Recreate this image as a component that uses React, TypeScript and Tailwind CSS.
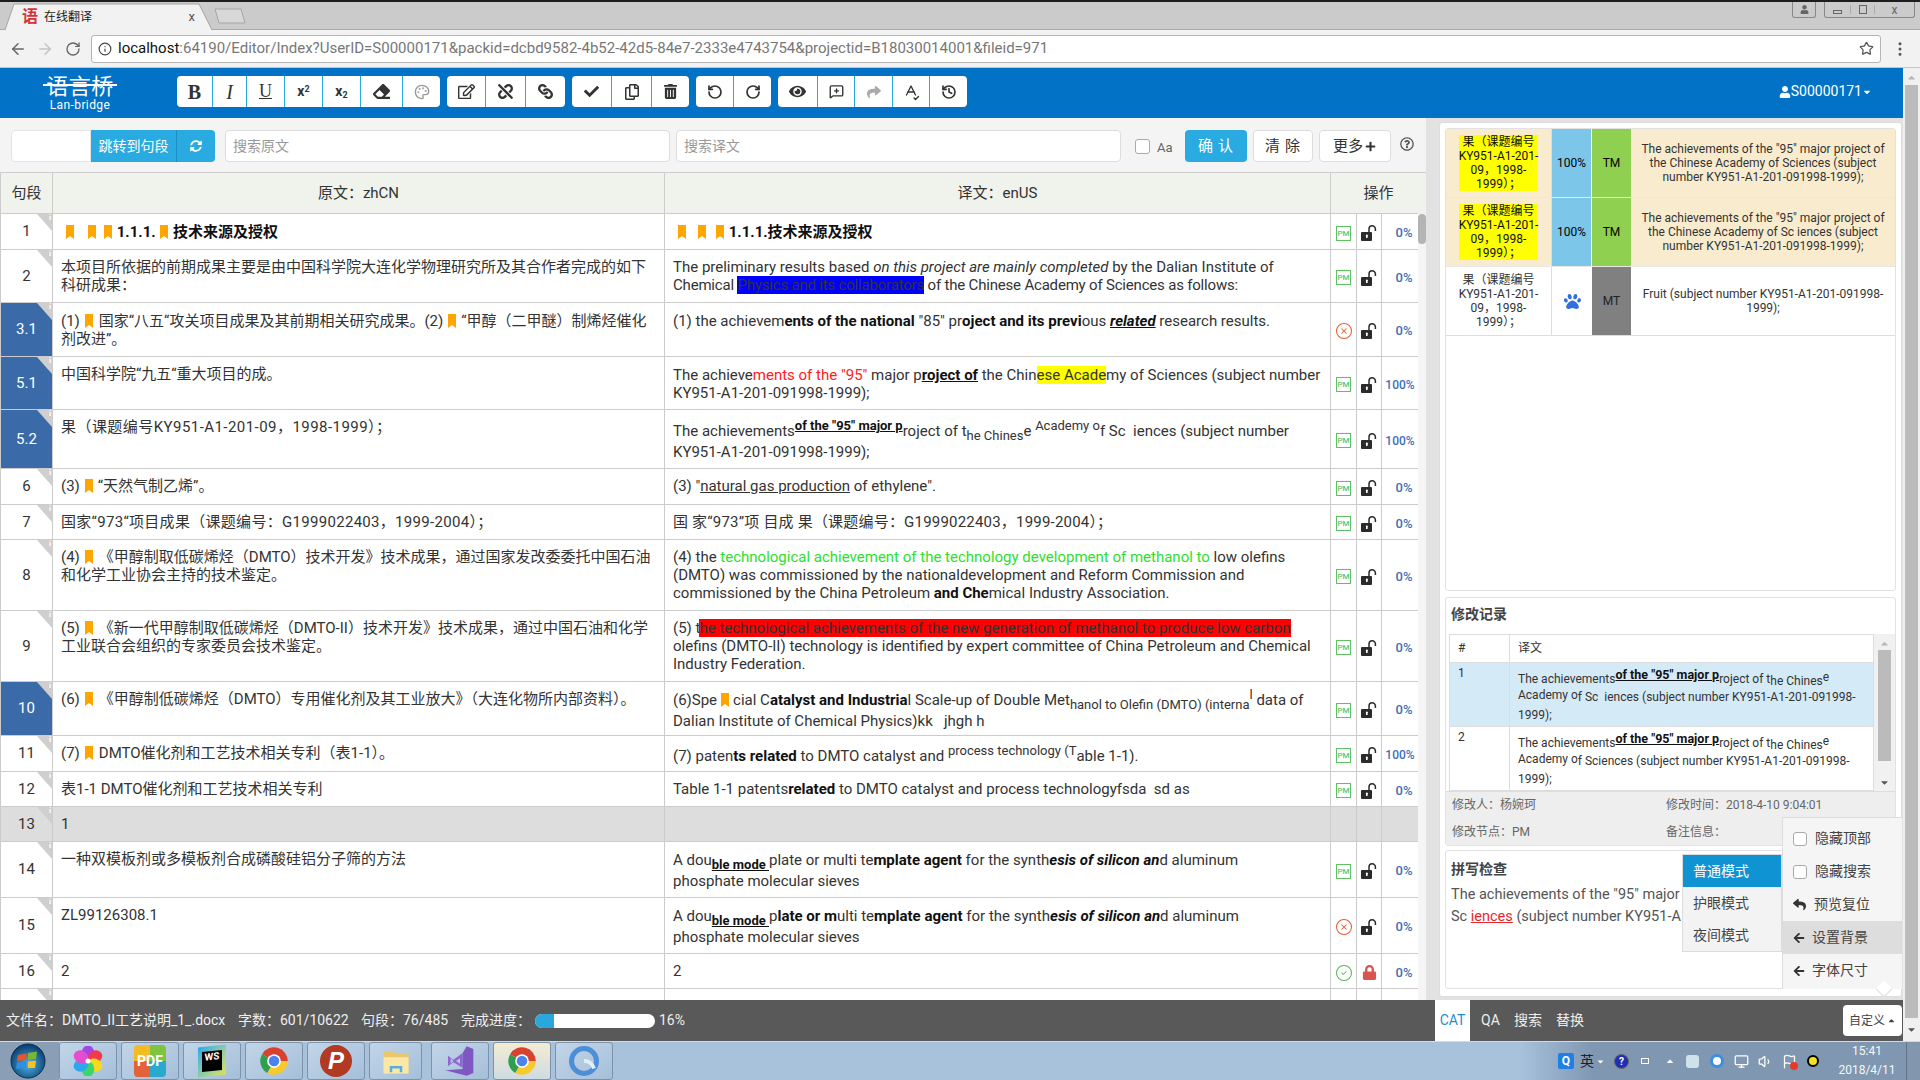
import type { ReactNode } from "react";
import {
  ArrowLeft,
  ArrowRight,
  CircleCheck,
  CircleX,
  EllipsisVertical,
  Flag,
  History,
  Info,
  MessageSquarePlus,
  Monitor,
  Palette,
  RotateCcw,
  RotateCw,
  SpellCheck,
  Star,
  Volume1,
} from "lucide-react";
import {
  FaCaretDown,
  FaCaretUp,
  FaCheck,
  FaEraser,
  FaEye,
  FaLink,
  FaLock,
  FaPaw,
  FaPlus,
  FaRegCopy,
  FaRegEdit,
  FaRegQuestionCircle,
  FaReply,
  FaShare,
  FaArrowLeft,
  FaSyncAlt,
  FaTrashAlt,
  FaUnlink,
  FaUser,
} from "react-icons/fa";

/* small pieces used inside the segment text */
const Bm = ({ className = "ml-[2px] mr-[5px]" }: { className?: string }) => (
  <svg viewBox="0 0 8 14" className={`inline-block w-[8px] h-[14px] align-[-2px] ${className}`}>
    <path d="M0 0H8V14L4 11L0 14Z" fill="#ffa500" />
  </svg>
);
const B = ({ children }: { children: ReactNode }) => <b className="font-bold text-[#111]">{children}</b>;
const Sup = ({ children, strong }: { children: ReactNode; strong?: boolean }) => (
  <span className={`relative -top-[6px] text-[13px] ${strong ? "font-bold underline text-[#111]" : ""}`}>{children}</span>
);
const Sub = ({ children, strong }: { children: ReactNode; strong?: boolean }) => (
  <span className={`relative top-[4px] text-[13px] ${strong ? "font-bold underline text-[#111]" : ""}`}>{children}</span>
);

type Seg = {
  num: string;
  h: string;
  active?: boolean;
  gray?: boolean;
  src?: ReactNode;
  tgt?: ReactNode;
  tall?: string;
  state?: "pm" | "x" | "ok";
  lock?: "open" | "red";
  pct?: string;
};

const DOUBLE = (
  <>
    A dou<Sub strong>ble mode </Sub>
  </>
);

const SEGMENTS: Seg[] = [
  {
    num: "1",
    h: "h-[36px]",
    src: (
      <b className="relative top-[1px] font-bold text-[#111]">
        <Bm className="ml-[5px] mr-[7px]" />
        <Bm className="ml-[7px] mr-[4px]" />
        <Bm className="ml-[4px] mr-[1px]" /> 1.1.1. <Bm className="ml-[1px] mr-[1px]" /> 技术来源及授权
      </b>
    ),
    tgt: (
      <b className="relative top-[1px] font-bold text-[#111]">
        <Bm className="ml-[5px] mr-[6px]" />
        <Bm className="ml-[6px] mr-[5px]" />
        <Bm className="ml-[5px] mr-[1px]" /> 1.1.1.技术来源及授权
      </b>
    ),
  },
  {
    num: "2",
    h: "h-[53px]",
    src: (
      <>
        本项目所依据的前期成果主要是由中国科学院大连化学物理研究所及其合作者完成的如下
        <br />
        科研成果：
      </>
    ),
    tgt: (
      <>
        The preliminary results based <i>on this project are mainly completed</i> by the Dalian Institute of
        <br />
        <span className="tracking-[-0.19px]">
          Chemical <span className="bg-[#0000ff]">Physics and its collaborators</span> of the Chinese Academy of Sciences as follows:
        </span>
      </>
    ),
  },
  {
    num: "3.1",
    h: "h-[54px]",
    active: true,
    state: "x",
    src: (
      <span className="relative top-[1px]">
        (1)
        <Bm className="ml-[5px] mr-[6px]" />
        国家“八五“攻关项目成果及其前期相关研究成果。(2)
        <Bm className="ml-[5px] mr-[5px]" />
        “甲醇（二甲醚）制烯烃催化
        <br />
        剂改进”。
      </span>
    ),
    tgt: (
      <span className="relative top-[1px]">
        (1) the achievem<B>ents of the national</B> "85" pr<B>oject and its previ</B>ous{" "}
        <b className="font-bold italic underline text-[#111]">related</b> research results.
      </span>
    ),
  },
  {
    num: "5.1",
    h: "h-[53px]",
    active: true,
    pct: "100%",
    src: "中国科学院“九五“重大项目的成。",
    tgt: (
      <span className="relative top-[1px]">
        The achieve<span className="text-[#ff2020]">ments of the "95"</span> major p
        <b className="font-bold underline text-[#111]">roject of</b> the Chin
        <span className="bg-[#ffff00]">ese Acade</span>my of Sciences (subject number
        <br />
        KY951-A1-201-091998-1999);
      </span>
    ),
  },
  {
    num: "5.2",
    h: "h-[59px]",
    active: true,
    tall: "pt-[11px]",
    pct: "100%",
    src: <span className="tracking-[0.45px]">果（课题编号KY951-A1-201-09，1998-1999）；</span>,
    tgt: (
      <>
        The achievements<Sup strong>of the "95" major p</Sup>roject of t<Sub>he Chines</Sub>e <Sup>Academy o</Sup>f Sc&nbsp; iences (subject number
        <br />
        KY951-A1-201-091998-1999);
      </>
    ),
  },
  {
    num: "6",
    h: "h-[36px]",
    src: (
      <>
        (3)
        <Bm className="ml-[5px] mr-[5px]" />
        “天然气制乙烯”。
      </>
    ),
    tgt: (
      <>
        (3) "<u>natural gas production</u> of ethylene".
      </>
    ),
  },
  {
    num: "7",
    h: "h-[35px]",
    src: <span className="tracking-[0.3px]">国家“973“项目成果（课题编号：G1999022403，1999-2004）；</span>,
    tgt: <span className="tracking-[0.2px]">国 家“973”项 目成 果（课题编号：G1999022403，1999-2004）；</span>,
  },
  {
    num: "8",
    h: "h-[71px]",
    src: (
      <>
        (4)
        <Bm className="ml-[5px] mr-[6px]" />
        《甲醇制取低碳烯烃（DMTO）技术开发》技术成果，通过国家发改委委托中国石油
        <br />
        和化学工业协会主持的技术鉴定。
      </>
    ),
    tgt: (
      <>
        (4) the <span className="text-[#2ee02e]">technological achievement of the technology development of methanol to</span> low olefins
        <br />
        (DMTO) was commissioned by the nationaldevelopment and Reform Commission and
        <br />
        commissioned by the China Petroleum <B>and Che</B>mical Industry Association.
      </>
    ),
  },
  {
    num: "9",
    h: "h-[71px]",
    src: (
      <>
        (5)
        <Bm className="ml-[5px] mr-[6px]" />
        《新一代甲醇制取低碳烯烃（DMTO-II）技术开发》技术成果，通过中国石油和化学
        <br />
        工业联合会组织的专家委员会技术鉴定。
      </>
    ),
    tgt: (
      <>
        (5) t<span className="bg-[#ff0000] -ml-[1px]">he technological achievements of the new generation of methanol to produce low carbon </span>
        <br />
        olefins (DMTO-II) technology is identified by expert committee of China Petroleum and Chemical
        <br />
        Industry Federation.
      </>
    ),
  },
  {
    num: "10",
    h: "h-[54px]",
    active: true,
    tall: "pt-[8px]",
    src: (
      <>
        (6)
        <Bm className="ml-[5px] mr-[6px]" />
        《甲醇制低碳烯烃（DMTO）专用催化剂及其工业放大》（大连化物所内部资料）。
      </>
    ),
    tgt: (
      <>
        (6)Spe
        <Bm className="ml-[4px] mr-[4px]" />
        cial C<B>atalyst and Industria</B>l Scale-up of Double Met<Sub>hanol to Olefin (DMTO) (interna</Sub>
        <Sup>l</Sup> data of
        <br />
        Dalian Institute of Chemical Physics)kk &nbsp; jhgh h
      </>
    ),
  },
  {
    num: "11",
    h: "h-[36px]",
    pct: "100%",
    src: (
      <>
        (7)
        <Bm className="ml-[5px] mr-[6px]" />
        DMTO催化剂和工艺技术相关专利（表1-1）。
      </>
    ),
    tgt: (
      <span className="relative top-[3px]">
        (7) paten<B>ts related</B> to DMTO catalyst and <Sup>process technology (T</Sup>able 1-1).
      </span>
    ),
  },
  {
    num: "12",
    h: "h-[35px]",
    src: "表1-1 DMTO催化剂和工艺技术相关专利",
    tgt: (
      <>
        Table 1-1 patents<B>related</B> to DMTO catalyst and process technologyfsda&nbsp; sd as
      </>
    ),
  },
  { num: "13", h: "h-[35px]", gray: true, src: "1" },
  {
    num: "14",
    h: "h-[56px]",
    tall: "pt-[8px]",
    src: "一种双模板剂或多模板剂合成磷酸硅铝分子筛的方法",
    tgt: (
      <>
        {DOUBLE}plate or multi te<B>mplate agent</B> for the synth
        <b className="font-bold italic text-[#111]">esis of silicon an</b>d aluminum
        <br />
        phosphate molecular sieves
      </>
    ),
  },
  {
    num: "15",
    h: "h-[56px]",
    tall: "pt-[8px]",
    state: "x",
    src: "ZL99126308.1",
    tgt: (
      <>
        {DOUBLE}p<B>late or m</B>ulti te<B>mplate agent</B> for the synth
        <b className="font-bold italic text-[#111]">esis of silicon an</b>d aluminum
        <br />
        phosphate molecular sieves
      </>
    ),
  },
  { num: "16", h: "h-[35px]", state: "ok", lock: "red", src: "2", tgt: "2" },
  { num: "", h: "h-[35px]", state: undefined, src: "" },
];

const OpenLock = () => (
  <svg viewBox="0 0 16 16" className="w-[16px] h-[16px]">
    <rect x="0" y="7" width="11" height="9" rx="1" fill="#2b2b2b" />
    <path d="M8 7V4a3.2 3.2 0 0 1 6.4 0v2" fill="none" stroke="#2b2b2b" strokeWidth="1.5" />
    <rect x="5" y="10" width="1.6" height="3" fill="#fff" />
    <circle cx="5.8" cy="10.5" r="1" fill="#fff" />
  </svg>
);

function SegmentRow({ seg }: { seg: Seg }) {
  const blank = seg.gray || (!seg.src && !seg.tgt);
  return (
    <div className={`flex shrink-0 border-b border-[#ccc] ${seg.h} ${seg.gray ? "bg-[#dddddd]" : "bg-white"}`}>
      <div
        className={`relative w-[52px] shrink-0 flex items-center justify-center border-r border-[#ccc] text-[15px] ${
          seg.active ? "bg-[#3a6ba8] text-white" : "text-[#333]"
        }`}
      >
        <span className="absolute top-0 right-0 w-[15px] h-[17px] bg-[#cfcfcf] [clip-path:polygon(0_0,100%_0,100%_100%)]" />
        <span className="absolute top-[-1px] right-[1px] text-[8px] leading-[10px] font-bold text-white">i</span>
        {seg.num}
      </div>
      <div className="w-[612px] shrink-0 border-r border-[#ccc] pl-[8px] pt-[8px] leading-[18px] whitespace-nowrap overflow-hidden text-[15px] text-[#333]">
        {seg.src}
      </div>
      <div
        className={`w-[666px] shrink-0 border-r border-[#ccc] pl-[8px] whitespace-nowrap overflow-hidden text-[#333] text-[15px] ${
          seg.tall ? `${seg.tall} leading-[21px]` : "pt-[8px] leading-[18px]"
        }`}
      >
        {seg.tgt}
      </div>
      <div className="w-[26px] shrink-0 border-r border-[#ccc] flex items-center justify-center pt-[3px]">
        {blank ? null : seg.state === "x" ? (
          <CircleX size={18} strokeWidth={1.4} className="text-[#ea5d32]" />
        ) : seg.state === "ok" ? (
          <CircleCheck size={18} strokeWidth={1.4} className="text-[#57b85a]" />
        ) : (
          <span className="w-[15px] h-[15px] border border-[#5dc264] text-[#5fc568] text-[8px] leading-[13px] text-center font-medium">PM</span>
        )}
      </div>
      <div className="w-[25px] shrink-0 border-r border-[#ccc] flex items-center justify-center pt-[3px]">
        {blank ? null : seg.lock === "red" ? <FaLock size={15} className="text-[#d9534f]" /> : <OpenLock />}
      </div>
      <div
        className={`w-[36px] shrink-0 flex items-center justify-center pt-[3px] font-medium text-[#3f6fb3] whitespace-nowrap ${
          seg.pct ? "text-[12px]" : "pl-[8px] text-[13px]"
        }`}
      >
        {blank ? null : seg.pct ?? "0%"}
      </div>
    </div>
  );
}

/* toolbar groups: [width class, content] */
const TB_GROUPS: [string, ReactNode][][] = [
  [
    ["w-[36px]", <span className="font-['Liberation_Serif',serif] font-bold text-[20px] text-[#333]">B</span>],
    ["w-[34px]", <span className="font-['Liberation_Serif',serif] italic text-[20px] text-[#333]">I</span>],
    ["w-[38px]", <span className="font-['Liberation_Serif',serif] underline text-[18px] text-[#333]">U</span>],
    ["w-[38px]", <span className="font-bold text-[14px] text-[#333]">x<sup className="text-[9px]">2</sup></span>],
    ["w-[38px]", <span className="font-bold text-[14px] text-[#333]">x<sub className="text-[9px]">2</sub></span>],
    ["w-[42px]", <FaEraser size={17} className="text-[#333]" />],
    ["w-[37px]", <Palette size={16} className="text-[#999]" />],
  ],
  [
    ["w-[39px]", <FaRegEdit size={17} className="text-[#333]" />],
    ["w-[40px]", <FaUnlink size={15} className="text-[#333]" />],
    ["w-[39px]", <FaLink size={15} className="text-[#333] rotate-90" />],
  ],
  [
    ["w-[40px]", <FaCheck size={15} className="text-[#333]" />],
    ["w-[40px]", <FaRegCopy size={16} className="text-[#333]" />],
    ["w-[37px]", <FaTrashAlt size={15} className="text-[#333]" />],
  ],
  [
    ["w-[38px]", <RotateCcw size={16} strokeWidth={2.6} className="text-[#333]" />],
    ["w-[37px]", <RotateCw size={16} strokeWidth={2.6} className="text-[#333]" />],
  ],
  [
    ["w-[40px]", <FaEye size={17} className="text-[#333]" />],
    ["w-[37px]", <MessageSquarePlus size={15} strokeWidth={2.2} className="text-[#333]" />],
    ["w-[38px]", <FaShare size={14} className="text-[#aaa]" />],
    ["w-[37px]", <SpellCheck size={18} strokeWidth={1.8} className="text-[#333]" />],
    ["w-[37px]", <History size={16} strokeWidth={2.5} className="text-[#333]" />],
  ],
];

const TM_ROWS = [
  { pct: "100%", who: "TM", text: <>The achievements of the "95" major project of<br />the Chinese Academy of Sciences (subject<br />number KY951-A1-201-091998-1999);</> },
  { pct: "100%", who: "TM", text: <>The achievements of the "95" major project of<br />the Chinese Academy of Sc iences (subject<br />number KY951-A1-201-091998-1999);</> },
];

const HIST_TEXT = (tail: ReactNode) => (
  <>
    The achievements
    <span className="relative -top-[4px] text-[12.500px] font-bold underline text-[#111]">of the "95" major p</span>roject of t
    <span className="relative top-[2px]">he Chines</span>
    <span className="relative -top-[2px]">e</span>
    <br />
    <span className="relative -top-[2px]">Academy o</span>f {tail}
    <br />
    1999);
  </>
);

/* ---- browser chrome ---- */
function TabStrip() {
  return (
    <div className="h-[30px] shrink-0 bg-[#cbcbcb] border-t-2 border-[#1d1d20] border-b border-b-[#a9a9a9] flex items-end pl-[4px]">
      <div className="relative w-[209px] h-[27px] -mb-[1px] flex items-center pl-[18px] text-[12px] text-[#222]">
        <svg viewBox="0 0 209 27" className="absolute inset-0 w-full h-full">
          <path d="M1 27 L10 1 H195 L208 27" fill="#f2f2f2" stroke="#a5a5a5" />
        </svg>
        <span className="relative w-[16px] h-[17px] text-[#d4333a] text-[16px] leading-[17px] text-center font-bold">语</span>
        <span className="relative ml-[6px]">在线翻译</span>
        <span className="relative ml-auto mr-[18px] text-[13px] text-[#555]">x</span>
      </div>
      <svg viewBox="0 0 32 16" className="w-[32px] h-[16px] mb-[5px] ml-[1px]">
        <path d="M1 1H27L31 15H5Z" fill="#d8d8d8" stroke="#a5a5a5" />
      </svg>
      <div className="ml-auto self-start flex gap-[8px] mr-[5px]">
        <div className="w-[24px] h-[16px] border border-t-0 border-[#888] rounded-b-[3px] flex items-center justify-center">
          <FaUser size={9} className="text-[#666]" />
        </div>
        <div className="w-[91px] h-[16px] border border-t-0 border-[#888] rounded-b-[3px] flex items-center text-[#666]">
          <span className="w-[25px] flex justify-center"><span className="w-[9px] h-[4px] border border-[#666] mt-[4px]" /></span>
          <span className="w-[25px] flex justify-center border-x border-[#aaa]"><span className="w-[8px] h-[9px] border border-[#666]" /></span>
          <span className="flex-1 text-center text-[12px] leading-[14px]">x</span>
        </div>
      </div>
    </div>
  );
}

function AddressBar() {
  return (
    <div className="h-[38px] shrink-0 bg-[#f2f2f2] border-b border-[#c6c6c6] flex items-center pl-[9px] pr-[11px]">
      <ArrowLeft size={18} className="text-[#666]" />
      <ArrowRight size={18} className="text-[#c3c3c3] ml-[9px]" />
      <RotateCw size={16} className="text-[#666] ml-[11px]" />
      <div className="ml-[10px] flex-1 h-[28px] bg-white border border-[#b5b5b5] rounded-[3px] flex items-center pl-[6px] pr-[6px] text-[15px]">
        <Info size={14} className="text-[#444] mr-[6px]" />
        <span className="text-[#111]">localhost</span>
        <span className="text-[#777]">:64190/Editor/Index?UserID=S00000171&amp;packid=dcbd9582-4b52-42d5-84e7-2333e4743754&amp;projectid=B18030014001&amp;fileid=971</span>
        <Star size={15} className="ml-auto text-[#555]" />
      </div>
      <EllipsisVertical size={18} className="text-[#555] ml-[10px]" />
    </div>
  );
}

function HeaderBar() {
  return (
    <div className="h-[50px] shrink-0 bg-[#0172c5] flex items-center">
      <div className="w-[177px] shrink-0 flex flex-col items-center pr-[17px] text-white">
        <div className="relative text-[22px] leading-[24px] tracking-[0.5px]">
          语言桥
          <span className="absolute left-[-3px] right-[-3px] top-[9px] h-[2px] bg-white" />
        </div>
        <div className="text-[12px] leading-[12px] tracking-[0.4px]">Lan-bridge</div>
      </div>
      <div className="flex gap-[7px] mb-[3px]">
        {TB_GROUPS.map((g, i) => (
          <div key={i} className="h-[31px] bg-white rounded-[4px] flex overflow-hidden">
            {g.map(([w, icon], j) => (
              <div key={j} className={`${w} h-full flex items-center justify-center ${j < g.length - 1 ? "border-r border-[#29abe2]" : ""}`}>
                {icon}
              </div>
            ))}
          </div>
        ))}
      </div>
      <div className="ml-auto mr-[31px] mb-[3px] flex items-center text-white text-[14px]">
        <FaUser size={12} />
        S00000171
        <FaCaretDown size={10} />
      </div>
    </div>
  );
}

function SearchBar() {
  const btn = "h-[32px] rounded-[4px] border border-[#ddd] bg-white flex items-center justify-center text-[15px] text-[#333]";
  return (
    <div className="h-[54px] shrink-0 bg-[#f4f4f4] flex items-center pl-[11px] pt-[2px] text-[14px]">
      <div className="w-[80px] h-[32px] bg-white rounded-l-[4px] border border-[#e4e4e4]" />
      <div className="h-[32px] w-[85px] bg-[#29abe2] text-white flex items-center justify-center">跳转到句段</div>
      <div className="h-[32px] w-[39px] bg-[#29abe2] border-l border-[#1d8fc2] rounded-r-[4px] flex items-center justify-center">
        <FaSyncAlt size={12} className="text-white" />
      </div>
      <div className="ml-[10px] w-[445px] h-[32px] bg-white border border-[#ddd] rounded-[4px] pl-[7px] leading-[30px] text-[#999]">搜索原文</div>
      <div className="ml-[6px] w-[445px] h-[32px] bg-white border border-[#ddd] rounded-[4px] pl-[7px] leading-[30px] text-[#999]">搜索译文</div>
      <span className="ml-[14px] w-[15px] h-[15px] bg-white border border-[#aaa] rounded-[3px]" />
      <span className="ml-[7px] mt-[4px] text-[13px] text-[#666]">Aa</span>
      <div className="ml-[12px] w-[62px] h-[32px] rounded-[4px] bg-[#29abe2] text-white text-[15px] flex items-center justify-center tracking-[5px] pl-[5px]">确认</div>
      <div className={`ml-[6px] w-[60px] tracking-[5px] pl-[5px] ${btn}`}>清除</div>
      <div className={`ml-[6px] w-[72px] ${btn}`}>
        更多<FaPlus size={11} className="ml-[2px] text-[#333]" />
      </div>
      <FaRegQuestionCircle size={14} className="ml-[9px] -mt-[4px] text-[#555]" />
    </div>
  );
}

function SegmentTable() {
  return (
    <div className="flex-1 min-h-0 flex overflow-hidden border-t border-[#ccc] border-l">
      <div className="w-[1417px] shrink-0 flex flex-col overflow-hidden">
        <div className="flex h-[41px] shrink-0 bg-[#f0f2ec] border-b border-[#ccc] text-[15px] text-[#333]">
          <div className="w-[52px] border-r border-[#ccc] flex items-center justify-center">句段</div>
          <div className="w-[612px] border-r border-[#ccc] flex items-center justify-center">原文：zhCN</div>
          <div className="w-[666px] border-r border-[#ccc] flex items-center justify-center">译文：enUS</div>
          <div className="flex-1 flex items-center justify-center pl-[8px]">操作</div>
        </div>
        {SEGMENTS.map((s, i) => (
          <SegmentRow key={i} seg={s} />
        ))}
      </div>
      <div className="w-[8px] shrink-0 flex flex-col">
        <div className="h-[41px] shrink-0 bg-[#f0f2ec]" />
        <div className="flex-1 bg-[#f5f5f5]">
          <div className="h-[30px] rounded-[4px] bg-[#b4b4b4]" />
        </div>
      </div>
    </div>
  );
}

function TmPanel() {
  return (
    <div className="h-[463px] shrink-0 bg-white border border-[#e2e2e2] rounded-[3px]">
      {TM_ROWS.map((r, i) => (
        <div key={i} className="flex h-[69px] bg-[#f9ecce] border-b border-[#e8e8e8] text-[12px] leading-[14px]">
          <div className="w-[106px] shrink-0 flex items-center justify-center text-center border-r border-[#ddd]">
            <span className="bg-[#ffff00] text-[#111]">
              果（课题编号
              <br />
              KY951-A1-201-
              <br />
              09，1998-
              <br />
              1999）；
            </span>
          </div>
          <div className="w-[40px] shrink-0 bg-[#7cc6ea] flex items-center justify-center border-r border-white">{r.pct}</div>
          <div className="w-[39px] shrink-0 bg-[#90d050] flex items-center justify-center">{r.who}</div>
          <div className="flex-1 flex items-center justify-center text-center text-[#333]">
            <span>{r.text}</span>
          </div>
        </div>
      ))}
      <div className="flex h-[69px] bg-white border-b border-[#ddd] text-[12px] leading-[14px] text-[#333]">
        <div className="w-[106px] shrink-0 flex items-center justify-center text-center border-r border-[#ddd]">
          <span>
            果（课题编号
            <br />
            KY951-A1-201-
            <br />
            09，1998-
            <br />
            1999）；
          </span>
        </div>
        <div className="w-[40px] shrink-0 flex items-center justify-center">
          <FaPaw size={17} className="text-[#2f6fe0]" />
        </div>
        <div className="w-[39px] shrink-0 bg-[#808080] flex items-center justify-center text-[#222]">MT</div>
        <div className="flex-1 flex items-center justify-center text-center">
          <span>
            Fruit (subject number KY951-A1-201-091998-
            <br />
            1999);
          </span>
        </div>
      </div>
    </div>
  );
}

function HistoryPanel() {
  return (
    <div className="h-[249px] shrink-0 mt-[6px] bg-white border border-[#e2e2e2] rounded-[3px] flex flex-col">
      <div className="h-[36px] shrink-0 pl-[5px] pt-[7px] text-[14px] leading-[18px] font-bold text-[#444]">修改记录</div>
      <div className="h-[157px] shrink-0 flex pl-[3px]">
        <div className="w-[425px] shrink-0 border border-[#ddd] text-[12px] text-[#333] leading-[17px]">
          <div className="flex h-[28px] border-b border-[#ddd] items-center">
            <div className="w-[60px] pl-[8px] border-r border-[#ddd] h-full flex items-center">#</div>
            <div className="pl-[8px]">译文</div>
          </div>
          <div className="flex h-[64px] bg-[#d5eaf7] border-b border-[#ddd]">
            <div className="w-[60px] pl-[8px] pt-[2px] border-r border-[#ddd]">1</div>
            <div className="pl-[8px] pt-[7px] leading-[18px] whitespace-nowrap">{HIST_TEXT(<>Sc&nbsp; iences (subject number KY951-A1-201-091998-</>)}</div>
          </div>
          <div className="flex h-[64px]">
            <div className="w-[60px] pl-[8px] pt-[2px] border-r border-[#ddd]">2</div>
            <div className="pl-[8px] pt-[7px] leading-[18px] whitespace-nowrap">{HIST_TEXT(<>Sciences (subject number KY951-A1-201-091998-</>)}</div>
          </div>
        </div>
        <div className="flex-1 bg-[#f1f1f1] flex flex-col items-center">
          <FaCaretUp size={11} className="text-[#b8b8b8] mt-[4px]" />
          <div className="w-[13px] h-[111px] bg-[#bbb] mt-[1px]" />
          <FaCaretDown size={11} className="text-[#555] mt-[16px]" />
        </div>
      </div>
      <div className="flex-1 bg-[#eeeeee] border-t border-[#ddd] grid grid-cols-[214px_1fr] grid-rows-2 items-center pl-[6px] text-[12px] text-[#666]">
        <span>修改人：杨婉珂</span>
        <span>修改时间：2018-4-10 9:04:01</span>
        <span>修改节点：PM</span>
        <span>备注信息：</span>
      </div>
    </div>
  );
}

function SpellPanel() {
  return (
    <div className="h-[139px] shrink-0 mt-[4px] bg-white border border-[#e2e2e2] rounded-[3px] pl-[5px] pt-[9px] overflow-hidden whitespace-nowrap">
      <div className="text-[14px] leading-[18px] font-bold text-[#444]">拼写检查</div>
      <div className="mt-[6px] text-[14.500px] leading-[22px] text-[#555]">
        The achievements of the "95" major project of the Chinese Academy of
        <br />
        Sc <span className="text-[#e8262d] underline">iences</span> (subject number KY951-A1-201-091998-1999);
      </div>
    </div>
  );
}

function CustomMenus() {
  const item = "h-[33px] flex items-center pl-[10px] text-[14px] text-[#444]";
  return (
    <>
      <div className="absolute left-[1682px] top-[854px] w-[100px] h-[98px] bg-[#f3f3f3] border border-[#ddd] text-[14px] text-[#444] flex flex-col">
        <div className="h-[32px] bg-[#0f93d2] text-white flex items-center pl-[10px]">普通模式</div>
        <div className="h-[32px] flex items-center pl-[10px]">护眼模式</div>
        <div className="h-[32px] flex items-center pl-[10px]">夜间模式</div>
      </div>
      <div className="absolute left-[1782px] top-[817px] w-[120px] h-[172px] bg-[#f5f5f5] border-l border-t border-[#ddd] pt-[4px]">
        <div className={item}>
          <span className="w-[14px] h-[14px] bg-white border border-[#aaa] rounded-[3px] mr-[8px]" />
          隐藏顶部
        </div>
        <div className={item}>
          <span className="w-[14px] h-[14px] bg-white border border-[#aaa] rounded-[3px] mr-[8px]" />
          隐藏搜索
        </div>
        <div className={item}>
          <FaReply size={13} className="text-[#333] mr-[8px]" />
          预览复位
        </div>
        <div className={`${item} bg-[#dddddd]`}>
          <FaArrowLeft size={12} className="text-[#333] mr-[7px]" />
          设置背景
        </div>
        <div className={item}>
          <FaArrowLeft size={12} className="text-[#333] mr-[7px]" />
          字体尺寸
        </div>
        <span className="absolute bottom-[-6px] right-[12px] w-[12px] h-[12px] rotate-45 bg-white border-r border-b border-[#ddd]" />
      </div>
    </>
  );
}

function StatusBar() {
  return (
    <div className="h-[41px] shrink-0 bg-[#595959] flex items-center pl-[6px] text-[14px] text-[#eeeeee] whitespace-nowrap">
      <span className="w-[232px]">文件名：DMTO_II工艺说明_1_.docx</span>
      <span className="w-[123px]">字数：601/10622</span>
      <span className="w-[100px]">句段：76/485</span>
      <span className="w-[74px]">完成进度：</span>
      <div className="w-[120px] h-[14px] rounded-full bg-white overflow-hidden">
        <div className="w-[19px] h-full bg-[#2aa7dd]" />
      </div>
      <span className="ml-[4px]">16%</span>
      <div className="ml-[750px] w-[35px] h-full bg-white text-[#1f8fd0] flex items-center justify-center">CAT</div>
      <span className="ml-[11px] w-[33px]">QA</span>
      <span className="w-[42px]">搜索</span>
      <span>替换</span>
      <div className="ml-auto mr-[1px] w-[59px] h-[31px] bg-white rounded-[4px] text-[#444] text-[12px] flex items-center justify-center">
        自定义<FaCaretUp size={9} className="ml-[2px]" />
      </div>
    </div>
  );
}

function PageScrollbar() {
  return (
    <div className="w-[17px] shrink-0 bg-[#f0f0f0] flex flex-col items-center">
      <FaCaretUp size={11} className="text-[#b5b5b5] mt-[4px]" />
      <div className="w-[13px] flex-1 bg-[#bbbbbb] mt-[2px]" />
      <FaCaretDown size={11} className="text-[#555] my-[6px] h-[11px]" />
    </div>
  );
}

/* ---- taskbar icons ---- */
const ChromeIcon = () => (
  <svg viewBox="0 0 24 24" className="w-[30px] h-[30px]">
    <path d="M12 12L2.5 6.500A11 11 0 0 1 23 12Z" fill="#d8402f" />
    <path d="M12 12L23 12A11 11 0 0 1 6.500 21.500Z" fill="#f6c92d" />
    <path d="M12 12L6.500 21.500A11 11 0 0 1 2.500 6.500Z" fill="#2f9e4f" />
    <circle cx="12" cy="12" r="5.500" fill="#fff" />
    <circle cx="12" cy="12" r="4.200" fill="#4a82ee" />
  </svg>
);

const PETALS = ["#a445e8", "#f23a4d", "#f6d81f", "#39d66b", "#2ea7f0", "#e14fd0"];
const TASK_ICONS: ReactNode[] = [
  <svg viewBox="0 0 24 24" className="w-[30px] h-[30px]">
    {PETALS.map((c, i) => (
      <ellipse key={c} cx="12" cy="5.500" rx="5" ry="6" fill={c} transform={`rotate(${i * 60} 12 12)`} />
    ))}
    <circle cx="12" cy="12" r="2" fill="#fff" />
  </svg>,
  <div className="w-[32px] h-[32px] rounded-[4px] overflow-hidden relative grid grid-cols-2 grid-rows-2">
    <span className="bg-[#f5bb22]" />
    <span className="bg-[#7ec43e]" />
    <span className="bg-[#e2623b]" />
    <span className="bg-[#2aa9cc]" />
    <span className="absolute inset-0 flex items-center justify-center text-white text-[14px] font-bold">PDF</span>
  </div>,
  <div className="relative w-[28px] h-[30px] bg-gradient-to-br from-[#1aa9e6] to-[#d8e43c] -skew-y-6 flex items-center justify-center">
    <span className="w-[20px] h-[20px] bg-black text-white text-[10px] leading-[12px] font-bold text-center">WS</span>
  </div>,
  <ChromeIcon />,
  <div className="w-[32px] h-[32px] rounded-full bg-[#b03a22] flex items-center justify-center text-white text-[24px] leading-[24px] font-bold italic font-['Liberation_Sans',sans-serif]">P</div>,
  <svg viewBox="0 0 24 24" className="w-[30px] h-[30px]">
    <path d="M2 4H10L12 6H22V22H2Z" fill="#e9c76e" />
    <path d="M2 9H22V22H2Z" fill="#fbe8a6" />
    <path d="M8 21V17H16V21" fill="none" stroke="#5aaee0" strokeWidth="2" />
  </svg>,
  <svg viewBox="0 0 24 24" className="w-[32px] h-[32px]">
    <path d="M17 1L22 3V21L17 23L1 19L14 18V6L17 1Z" fill="#7e57c2" />
    <path d="M3 8L7 11L14 6V17L7 13L3 16Z" fill="#8e67d2" />
    <path d="M5 10V14L7 12Z M9 12L12 14V10Z" fill="#b9c8de" />
  </svg>,
  <ChromeIcon />,
  <svg viewBox="0 0 24 24" className="w-[30px] h-[30px]">
    <circle cx="12" cy="12" r="10" fill="none" stroke="#4d8fd6" strokeWidth="4" />
    <path d="M12 12a8 8 0 0 1 8 6" fill="none" stroke="#e3eef8" strokeWidth="3" />
  </svg>,
];

function TaskButton({ icon, lit, w = "w-[58px]" }: { icon: ReactNode; lit?: boolean; w?: string }) {
  return (
    <div
      className={`${w} h-[38px] shrink-0 rounded-[3px] border border-[#7c93ab] flex items-center justify-center ${
        lit ? "bg-gradient-to-b from-[#f4ecd2] to-[#cfdbe2]" : "bg-gradient-to-br from-[#c2d5e8] to-[#a5bfd9]"
      }`}
    >
      {icon}
    </div>
  );
}

function Taskbar() {
  return (
    <div className="h-[39px] shrink-0 bg-[#a8c2dc] flex items-center border-t border-[#cfdbe7]">
      <div className="w-[59px] h-full shrink-0 bg-[#8a9fb5] flex items-center justify-center pr-[4px]">
        <svg viewBox="0 0 36 36" className="w-[36px] h-[36px]">
          <defs>
            <radialGradient id="orb" cx="50%" cy="60%" r="60%">
              <stop offset="0%" stopColor="#4fb3e8" />
              <stop offset="100%" stopColor="#06396a" />
            </radialGradient>
          </defs>
          <circle cx="18" cy="18" r="17" fill="url(#orb)" stroke="#0d2e4d" />
          <path d="M8 12L16.500 10.500V17L7 18Z" fill="#e8552d" />
          <path d="M18 10L27 8.500L26 16L18 17Z" fill="#79b833" />
          <path d="M7 19.500L16.500 18.500V25L6 26Z" fill="#2f8fe0" />
          <path d="M18 18.500L26 17.500L25 25L18 25Z" fill="#f6c223" />
        </svg>
      </div>
      <div className="flex gap-[4px]">
        {TASK_ICONS.slice(0, 5).map((ic, i) => (
          <TaskButton key={i} icon={ic} />
        ))}
        <TaskButton icon={TASK_ICONS[5]} w="w-[53px]" />
      </div>
      <div className="flex gap-[4px] ml-[9px]">
        <TaskButton icon={TASK_ICONS[6]} />
        <TaskButton icon={TASK_ICONS[7]} lit />
        <TaskButton icon={TASK_ICONS[8]} />
      </div>
      <div className="ml-[46px] w-[1260px] h-full flex items-center bg-gradient-to-r from-[#a8c2dc] from-[69%] to-[#8097b2] to-[75%] pl-[899px] text-[#f4f7fa] whitespace-nowrap">
        <span className="w-[16px] h-[16px] bg-[#1e7fe6] rounded-[2px] text-white text-[12px] font-bold leading-[16px] text-center">Q</span>
        <span className="ml-[6px] text-[14px] text-[#222]">英</span>
        <FaCaretDown size={9} className="ml-[2px] text-white" />
        <span className="ml-[9px] w-[15px] h-[15px] rounded-full bg-[#1f2fb0] border border-[#666] text-white text-[10px] leading-[13px] text-center font-bold">?</span>
        <span className="ml-[12px] w-[8px] h-[6px] border border-white" />
        <FaCaretUp size={10} className="ml-[16px] text-white" />
        <span className="ml-[11px] w-[13px] h-[13px] bg-[#cfe2ec] rounded-[3px]" />
        <span className="ml-[11px] w-[14px] h-[14px] rounded-full border-[3px] border-[#3c8fe0] bg-white" />
        <Monitor size={15} className="ml-[10px] text-white" />
        <Volume1 size={15} className="ml-[9px] text-white" />
        <span className="relative ml-[9px] w-[15px] h-[15px]">
          <Flag size={15} className="text-white" />
          <span className="absolute right-[-1px] bottom-[-1px] w-[8px] h-[8px] bg-[#e33a2b] rounded-full" />
        </span>
        <span className="ml-[10px] w-[12px] h-[12px] bg-[#f6e21a] rounded-full border-2 border-black" />
        <div className="ml-[10px] w-[76px] text-center text-[12px] leading-[19px]">
          <div>15:41</div>
          <div>2018/4/11</div>
        </div>
      </div>
      <div className="ml-auto w-[14px] h-full bg-[#8297ad] border-l border-[#5f7488]" />
    </div>
  );
}

export default function App() {
  return (
    <div className="relative w-[1920px] h-[1080px] overflow-hidden flex flex-col bg-[#f4f4f4] font-['Roboto','Noto_Sans_CJK_SC',sans-serif]">
      <TabStrip />
      <AddressBar />
      <div className="flex-1 min-h-0 flex">
        <div className="w-[1903px] shrink-0 flex flex-col">
          <HeaderBar />
          <div className="flex-1 min-h-0 flex">
            <div className="w-[1426px] shrink-0 flex flex-col">
              <SearchBar />
              <SegmentTable />
            </div>
            <div className="w-[477px] shrink-0 bg-[#e2e2e2] pl-[13px] pt-[4px]">
              <div className="w-[463px] h-[875px] bg-white border border-[#ddd] rounded-[3px] p-[5px] flex flex-col">
                <TmPanel />
                <HistoryPanel />
                <SpellPanel />
              </div>
            </div>
          </div>
          <StatusBar />
        </div>
        <PageScrollbar />
      </div>
      <Taskbar />
      <CustomMenus />
    </div>
  );
}
